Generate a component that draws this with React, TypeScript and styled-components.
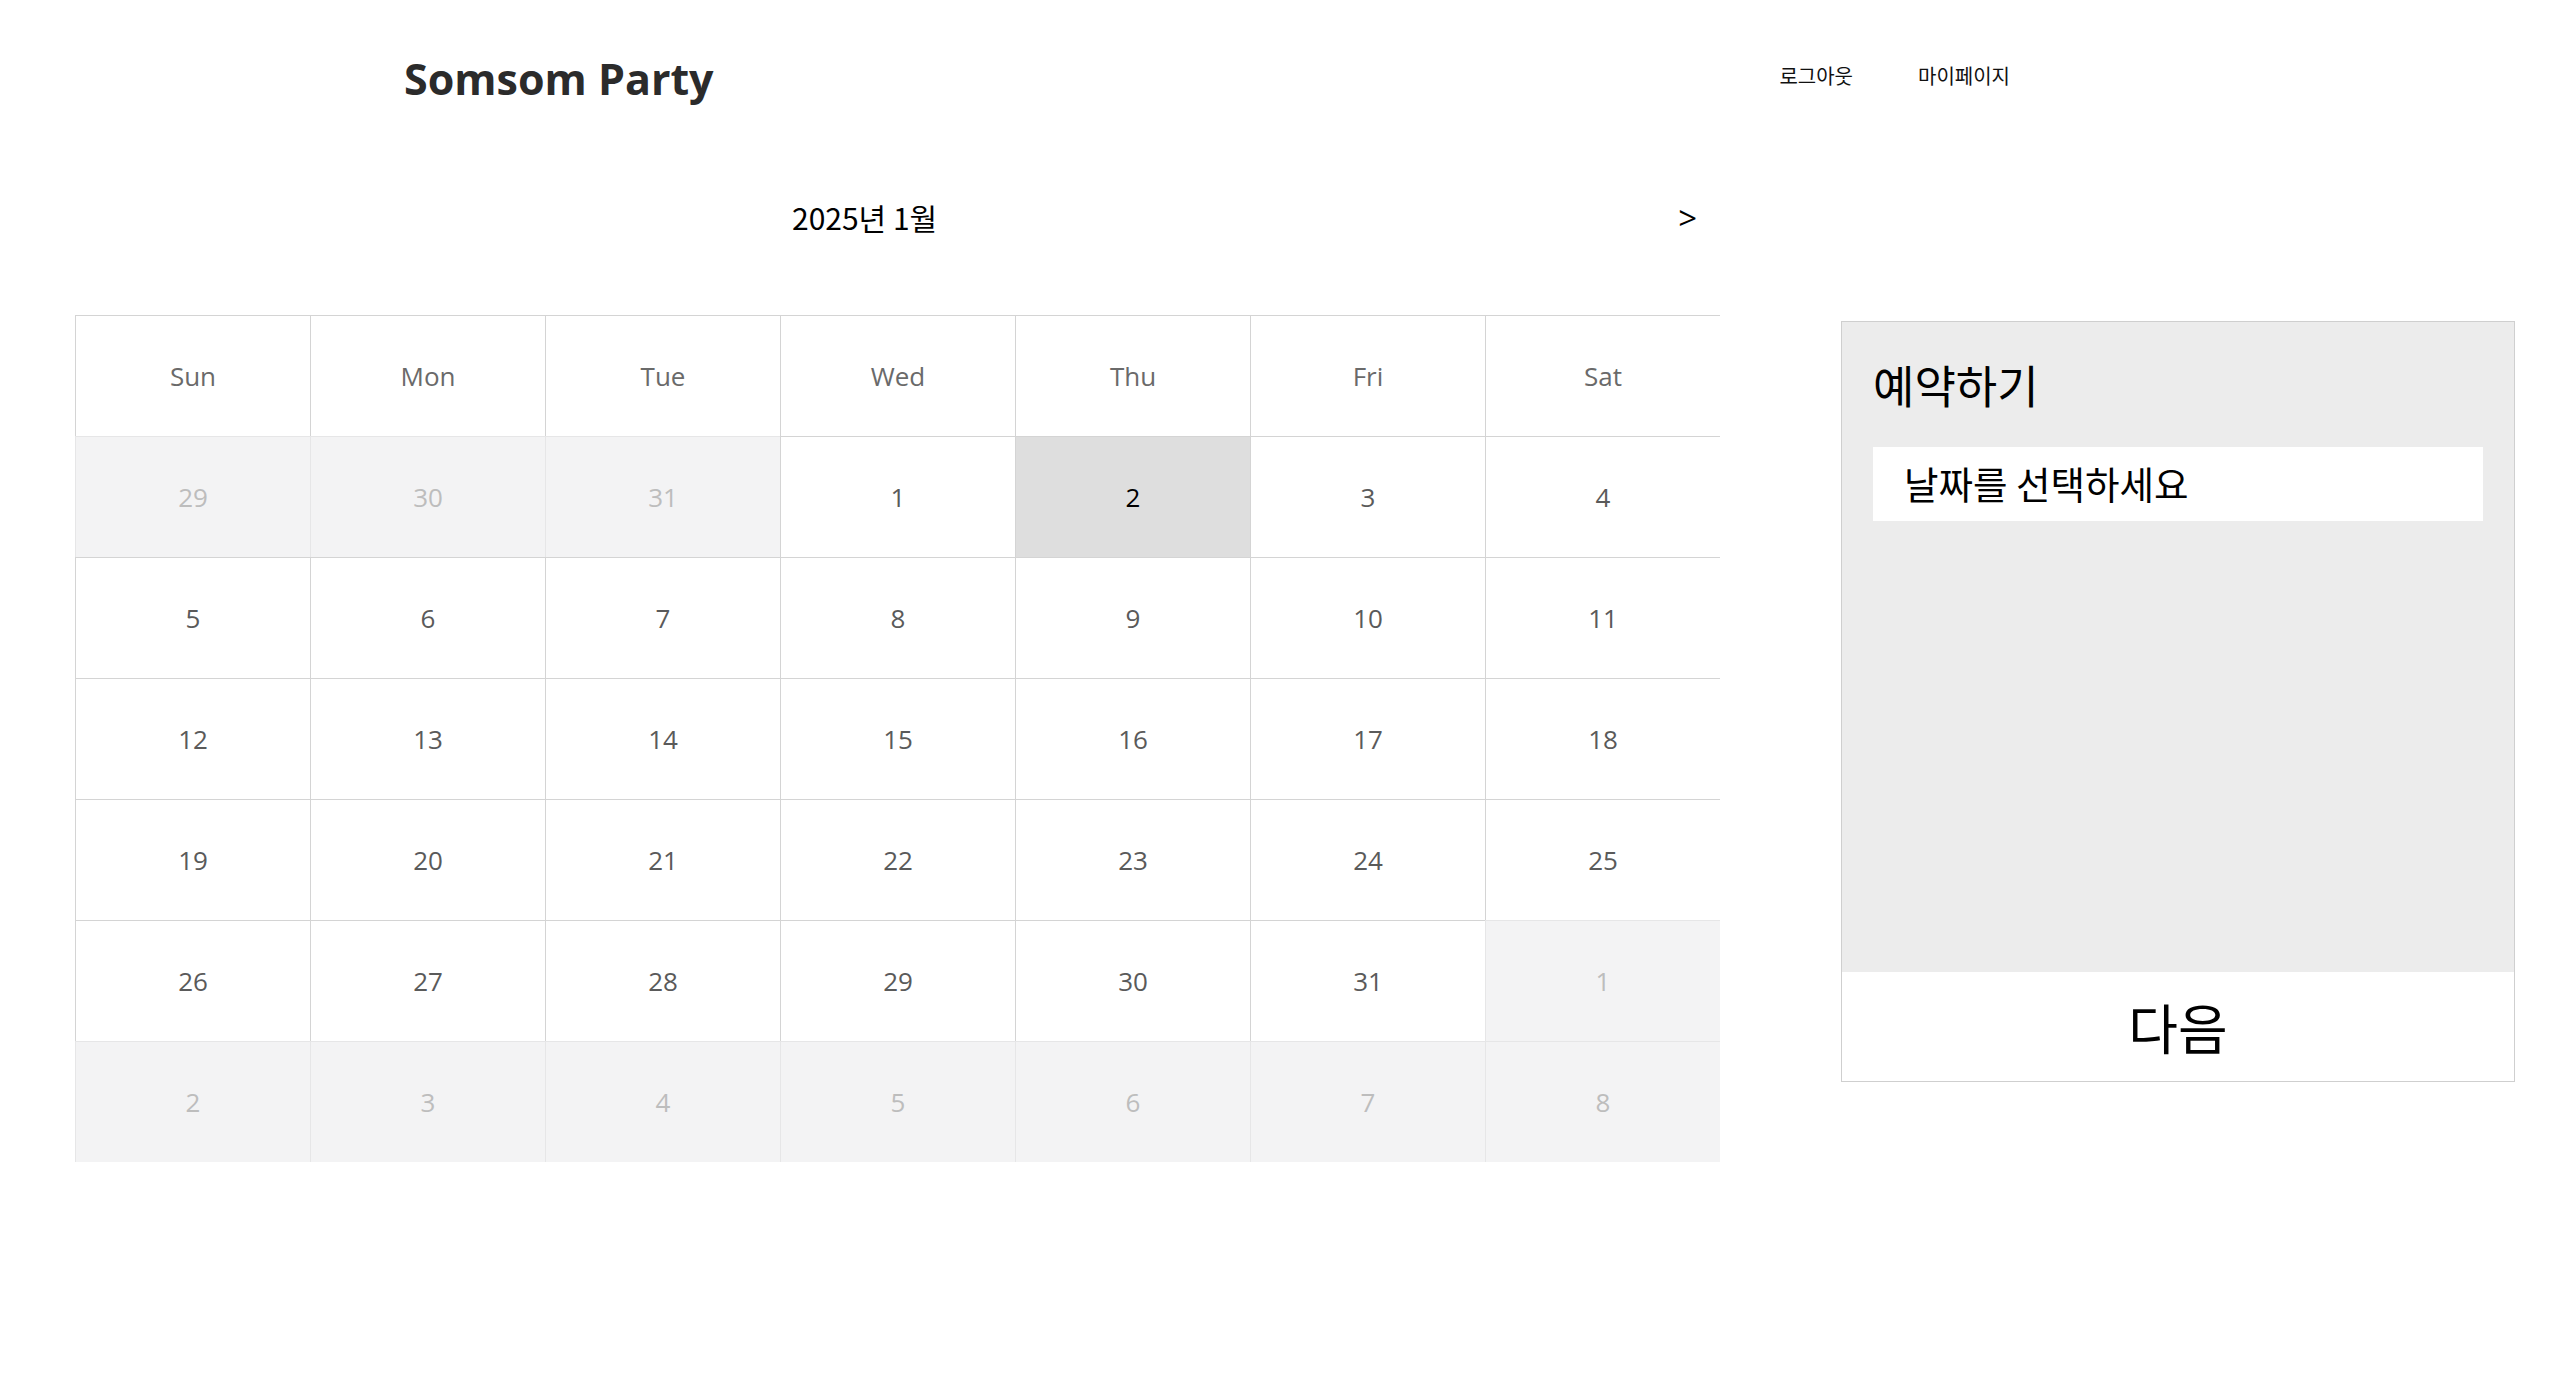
import React, { useState } from 'react';
import styled, { createGlobalStyle, css } from 'styled-components';

const GlobalStyle = createGlobalStyle`
  * {
    box-sizing: border-box;
  }
  body {
    margin: 0;
    background: #ffffff;
    font-family: 'Open Sans', 'Noto Sans CJK KR', sans-serif;
    color: #111111;
  }
`;

const WEEK_DAYS = ['Sun', 'Mon', 'Tue', 'Wed', 'Thu', 'Fri', 'Sat'];

type CalendarDay = {
  date: Date;
  outside: boolean;
};

// six weeks starting from the sunday on/before the 1st
const buildMonth = (year: number, month: number): CalendarDay[] => {
  const first = new Date(year, month, 1);
  return Array.from({ length: 42 }, (_, i) => {
    const date = new Date(year, month, 1 - first.getDay() + i);
    return { date, outside: date.getMonth() !== month };
  });
};

const isSameDay = (a: Date | null, b: Date) =>
  !!a &&
  a.getFullYear() === b.getFullYear() &&
  a.getMonth() === b.getMonth() &&
  a.getDate() === b.getDate();

const App: React.FC = () => {
  const [year, setYear] = useState(2025);
  const [month, setMonth] = useState(0);
  const [selected, setSelected] = useState<Date | null>(new Date(2025, 0, 2));

  const days = buildMonth(year, month);

  const goNext = () => {
    if (month === 11) {
      setYear(year + 1);
      setMonth(0);
    } else {
      setMonth(month + 1);
    }
  };

  return (
    <>
      <GlobalStyle />
      <Header>
        <Logo>Somsom Party</Logo>
        <Nav>
          <NavLink href="#">로그아웃</NavLink>
          <NavLink href="#">마이페이지</NavLink>
        </Nav>
      </Header>

      <Main>
        <CalendarSection>
          <MonthBar>
            <MonthTitle>
              {year}년 {month + 1}월
            </MonthTitle>
            <ArrowButton onClick={goNext}>&gt;</ArrowButton>
          </MonthBar>

          <Grid>
            {WEEK_DAYS.map((name) => (
              <WeekDay key={name}>{name}</WeekDay>
            ))}
            {days.map(({ date, outside }) => (
              <DayCell
                key={date.toISOString()}
                outside={outside}
                active={isSameDay(selected, date)}
                onClick={() => !outside && setSelected(date)}
              >
                {date.getDate()}
              </DayCell>
            ))}
          </Grid>
        </CalendarSection>

        <Panel>
          <PanelBody>
            <PanelTitle>예약하기</PanelTitle>
            <DateField>날짜를 선택하세요</DateField>
          </PanelBody>
          <SubmitButton>다음</SubmitButton>
        </Panel>
      </Main>
    </>
  );
};

export default App;

const Header = styled.header`
  display: flex;
  align-items: center;
  justify-content: space-between;
  height: 156px;
  padding: 0 550px 0 404px;
`;
const Logo = styled.h1`
  margin: 0;
  font-family: 'Open Sans', sans-serif;
  font-size: 43px;
  font-weight: 700;
  color: #2b2b2b;
`;
const Nav = styled.nav`
  display: flex;
  gap: 65px;
  margin-top: -6px;
`;
const NavLink = styled.a`
  font-family: 'Noto Sans CJK KR', sans-serif;
  font-size: 20px;
  color: #111111;
  text-decoration: none;
`;

const Main = styled.main`
  display: flex;
  align-items: flex-start;
  gap: 121px;
  padding: 0 45px 0 75px;
`;
const CalendarSection = styled.section`
  width: 1645px;
`;
const MonthBar = styled.div`
  display: flex;
  align-items: center;
  height: 122px;
  padding-left: 717px;
`;
const MonthTitle = styled.h3`
  margin: 0;
  font-family: 'Noto Sans CJK KR', sans-serif;
  font-size: 30px;
  font-weight: 400;
  color: #000000;
`;
const ArrowButton = styled.button`
  margin-left: auto;
  margin-right: 23px;
  padding: 0;
  border: none;
  background: none;
  font-family: 'Open Sans', sans-serif;
  font-size: 33px;
  color: #000000;
  cursor: pointer;
`;
const Grid = styled.div`
  display: grid;
  grid-template-columns: repeat(7, 235px);
  grid-auto-rows: 121px;
  margin-top: 37px;
`;
const cellBase = css`
  display: flex;
  align-items: center;
  justify-content: center;
  border-top: 1px solid #d4d4d4;
  border-left: 1px solid #d4d4d4;
  font-size: 26px;
`;
const WeekDay = styled.div`
  ${cellBase};
  color: #6a6a6a;
`;
const DayCell = styled.div<{ outside: boolean; active: boolean }>`
  ${cellBase};
  color: #5a5a5a;
  cursor: pointer;
  ${({ active }) =>
    active &&
    css`
      background: #dedede;
      color: #000000;
    `}
  ${({ outside }) =>
    outside &&
    css`
      background: #f3f3f4;
      border-color: #e6e6e7;
      color: #bdbdbd;
      cursor: default;
    `}
`;

const Panel = styled.aside`
  display: flex;
  flex-direction: column;
  width: 675px;
  height: 761px;
  margin-top: 165px;
  border: 1px solid #cfcfcf;
  background: #ececec;
`;
const PanelBody = styled.div`
  flex: 1;
  padding: 33px 31px 0;
`;
const PanelTitle = styled.h2`
  margin: 0;
  font-family: 'Noto Sans CJK KR', sans-serif;
  font-size: 45px;
  font-weight: 400;
  line-height: 59px;
  color: #000000;
`;
const DateField = styled.div`
  display: flex;
  align-items: center;
  height: 74px;
  margin-top: 33px;
  padding: 0 0 4px 31px;
  background: #ffffff;
  font-family: 'Noto Sans CJK KR', sans-serif;
  font-size: 37.5px;
  color: #000000;
`;
const SubmitButton = styled.button`
  height: 109px;
  padding: 0;
  border: none;
  background: #ffffff;
  font-family: 'Noto Sans CJK KR', sans-serif;
  font-size: 54px;
  color: #000000;
  cursor: pointer;
`;
